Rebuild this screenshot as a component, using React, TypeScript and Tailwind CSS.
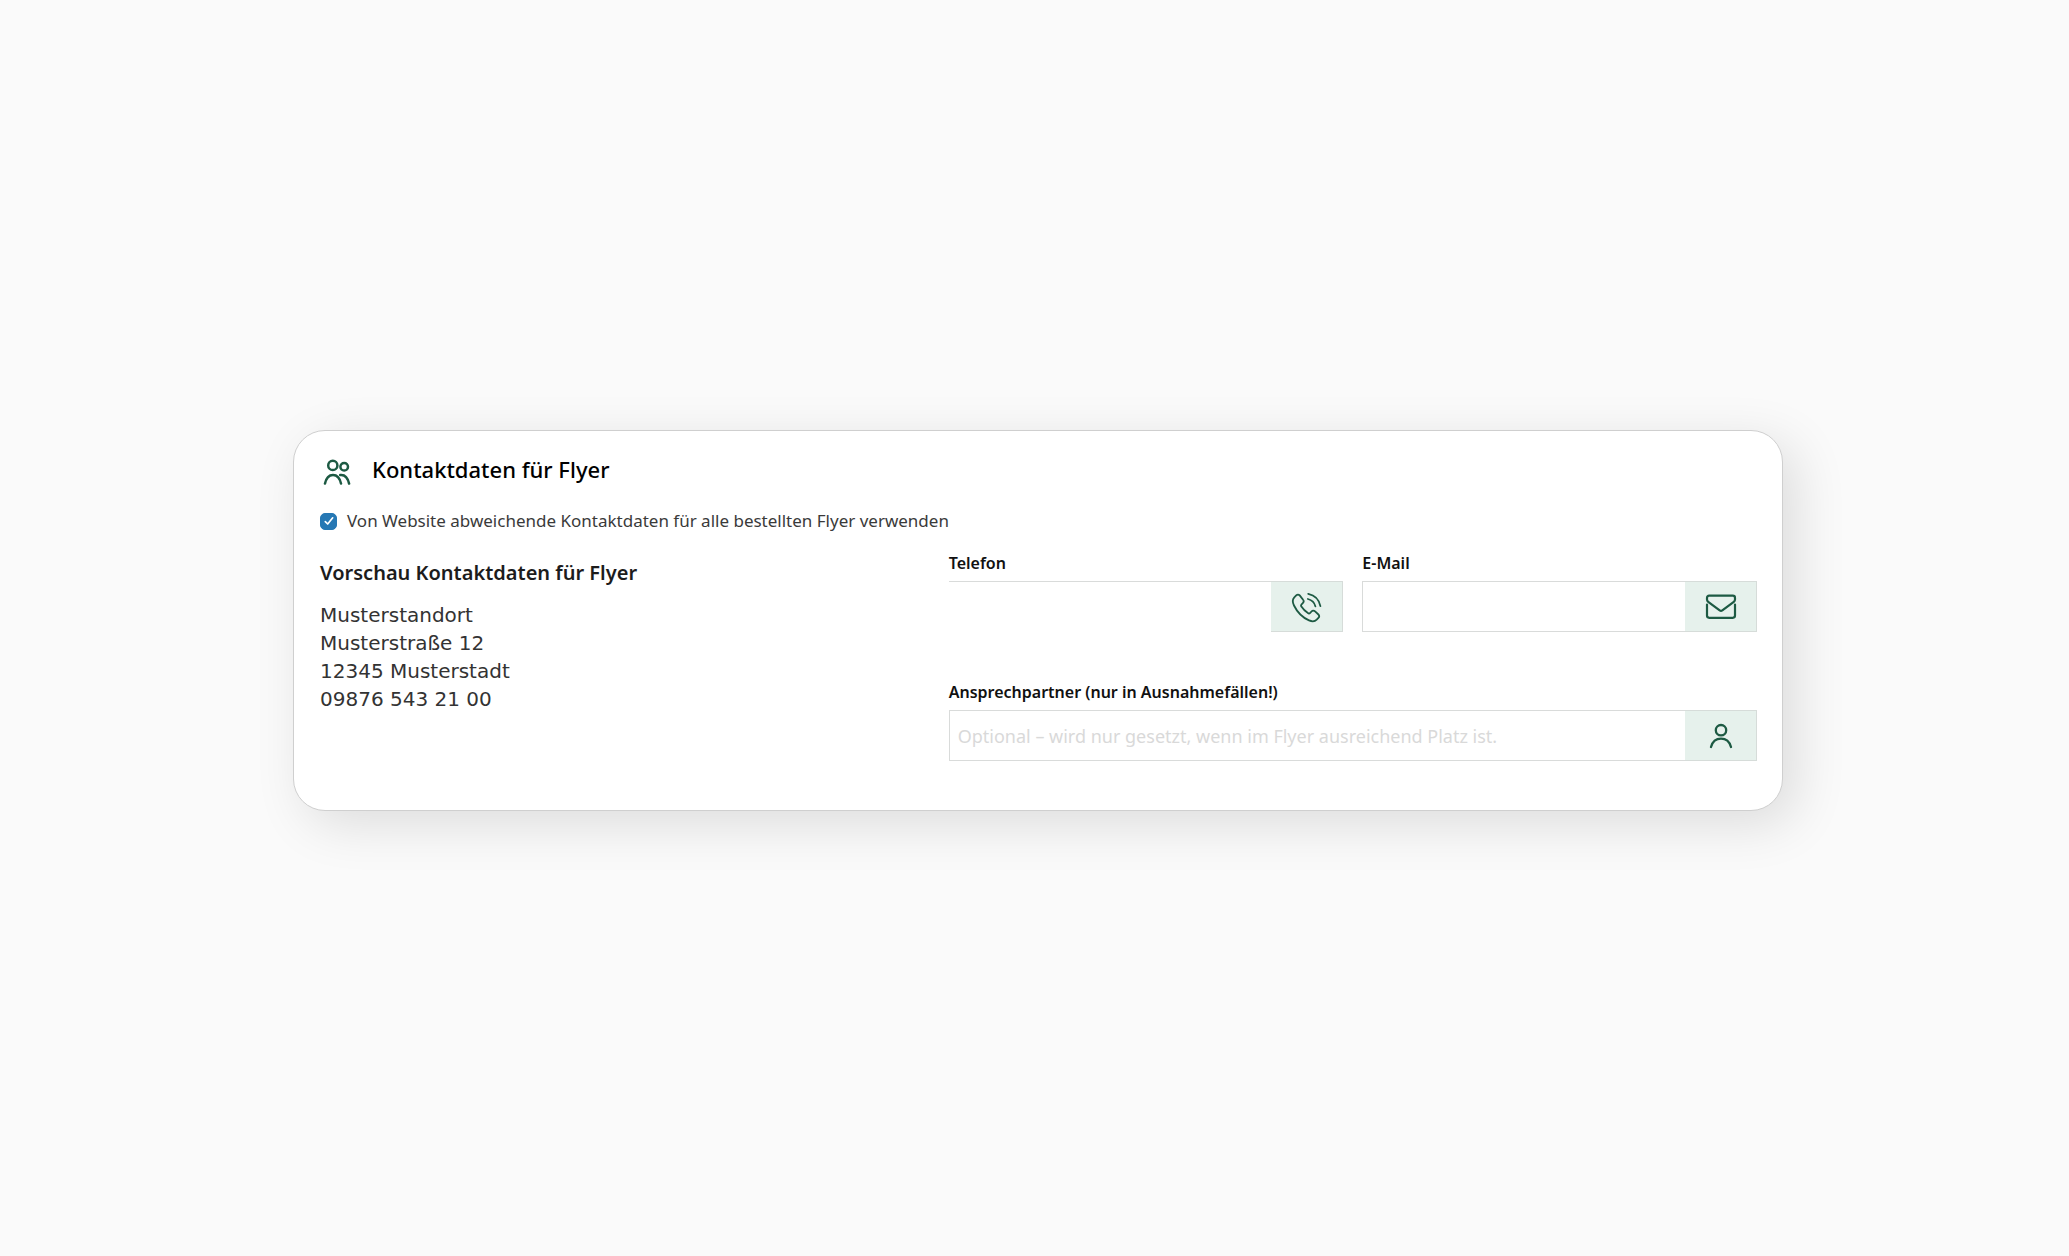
import type { ReactNode } from 'react';

function UsersIcon() {
  return (
    <svg width="28" height="32" viewBox="0 -7 28 32" fill="none" stroke="#1d5a43" strokeWidth="2.5" strokeLinecap="round" strokeLinejoin="round" aria-hidden="true">
      <circle cx="9.8" cy="5.4" r="4.600" />
      <circle cx="21.2" cy="6.800" r="3.800" />
      <path d="M2 23.600C3.100 18.200 6 14.900 10 14.900s6.900 3.400 8 8.700" />
      <path d="M17.200 15c4.600-.6 7.700 3.400 8.900 8.600" />
    </svg>
  );
}

function PhoneIcon() {
  return (
    <svg width="32" height="32" viewBox="0 0 32 32" fill="none" stroke="#1d5a43" strokeWidth="1.8" strokeLinecap="round" strokeLinejoin="round" aria-hidden="true">
      <path d="M5.200 4.400 3.300 6.300C1.300 8.300 1.500 11.400 3 14.500c3.200 6.600 8.300 11.900 15 14.900 2.800 1.200 5.800 1.200 7.700-.7l1.700-1.800c1-1.100 1-2.400 0-3.400l-3.300-3.100c-1.100-1-2.600-1-3.600.1l-1.300 1.400c-.7.7-1.500.8-2.300.2-2.600-1.700-4.800-3.900-6.500-6.500-.6-.8-.4-1.600.2-2.300l1.200-1.200c1.100-1.100 1.100-2.500.1-3.600L8.700 4.400c-1-1.100-2.400-1.100-3.500 0Z" />
      <path d="M17.200 2.800c6.300 1.300 11 6 12.200 12.400" />
      <path d="M16.900 8c3.900 1 6.600 3.600 7.500 7.400" />
    </svg>
  );
}

function MailIcon() {
  return (
    <svg width="32" height="32" viewBox="0 0 32 32" fill="none" stroke="#1d5a43" strokeWidth="2.2" strokeLinecap="round" strokeLinejoin="round" aria-hidden="true">
      <path d="M2 13.500v11.100c0 1.400.8 2.200 2.200 2.200h23.600c1.400 0 2.200-.8 2.200-2.200V13.500" />
      <path d="M4.200 4.700h23.600C29.200 4.700 30 5.500 30 6.900v1.600c0 1-.4 1.700-1.200 2.300L17.300 19.400c-.9.700-1.700.7-2.600 0L3.200 10.800C2.400 10.200 2 9.500 2 8.500V6.900C2 5.500 2.800 4.700 4.200 4.700Z" />
    </svg>
  );
}

function PersonIcon() {
  return (
    <svg width="32" height="32" viewBox="0 0 32 32" fill="none" stroke="#1d5a43" strokeWidth="2.3" strokeLinecap="round" strokeLinejoin="round" aria-hidden="true">
      <circle cx="16" cy="10.200" r="5.200" />
      <path d="M6 27c1.500-5.300 5.400-8.300 10-8.300s8.500 3 10 8.300" />
    </svg>
  );
}

type FieldProps = {
  id: string;
  label: string;
  type: string;
  icon: ReactNode;
  placeholder?: string;
  open?: boolean;
};

function Field({ id, label, type, icon, placeholder, open }: FieldProps) {
  return (
    <div className="flex min-w-0 flex-col gap-1.5">
      <label htmlFor={id} className="text-base leading-6 font-semibold text-[#111]">
        {label}
      </label>
      <div className="flex h-[51px]">
        <input
          id={id}
          type={type}
          placeholder={placeholder}
          className={
            open
              ? 'min-w-0 flex-1 border-t border-[#d9dbda] bg-white px-2 text-lg outline-none'
              : 'min-w-0 flex-1 border border-r-0 border-[#d9dbda] bg-white px-2 text-lg outline-none placeholder:text-[#d9d9d9]'
          }
        />
        <span className="flex w-[72px] items-center justify-center border border-l-0 border-[#d6dcd9] bg-[#e6f1ec]">
          {icon}
        </span>
      </div>
    </div>
  );
}

export default function App() {
  return (
    <main className="flex min-h-screen items-center bg-[#fafafa] pr-[286px] pb-[15px] pl-[293px] font-['Noto_Sans',sans-serif]">
      <section className="w-full rounded-[32px] border border-[#cfcfcf] bg-white pt-[22px] pr-[25px] pb-[49px] pl-[26px] shadow-[13px_13px_52px_rgba(0,0,0,0.12)]">
        <header className="flex h-8 items-center gap-[21px] pl-[3px]">
          <UsersIcon />
          <h1 className="text-[22px] leading-8 font-medium text-black">Kontaktdaten für Flyer</h1>
        </header>

        <label className="mt-[22px] flex h-7 items-center gap-2.5 text-[17px] leading-7 text-[#3a3a3a]">
          <span className="grid size-[17px] place-items-center">
            <input
              type="checkbox"
              defaultChecked
              className="peer col-start-1 row-start-1 size-[17px] appearance-none rounded-[5px] border border-[#2678b4] bg-white checked:bg-[#2678b4]"
            />
            <svg className="pointer-events-none invisible col-start-1 row-start-1 size-3 peer-checked:visible" viewBox="0 0 12 12" fill="none" stroke="white" strokeWidth="1.7" strokeLinecap="round" strokeLinejoin="round" aria-hidden="true">
              <path d="M2.300 6.600 4.700 9 9.700 2.800" />
            </svg>
          </span>
          Von Website abweichende Kontaktdaten für alle bestellten Flyer verwenden
        </label>

        <div className="mt-4 grid grid-cols-[minmax(0,7fr)_minmax(0,9fr)]">
          <div className="pt-2">
            <h2 className="text-xl leading-7 font-semibold text-[#1c1c1c]">Vorschau Kontaktdaten für Flyer</h2>
            <address className="mt-3.5 font-['DejaVu_Sans',sans-serif] text-xl leading-7 text-[#333] not-italic">
              Musterstandort
              <br />
              Musterstraße 12
              <br />
              12345 Musterstadt
              <br />
              09876 543 21 00
            </address>
          </div>

          <form className="flex flex-col gap-12">
            <div className="grid grid-cols-2 gap-[19px]">
              <Field id="telefon" label="Telefon" type="tel" icon={<PhoneIcon />} open />
              <Field id="email" label="E-Mail" type="email" icon={<MailIcon />} />
            </div>
            <Field
              id="ansprechpartner"
              label="Ansprechpartner (nur in Ausnahmefällen!)"
              type="text"
              icon={<PersonIcon />}
              placeholder="Optional – wird nur gesetzt, wenn im Flyer ausreichend Platz ist."
            />
          </form>
        </div>
      </section>
    </main>
  );
}
